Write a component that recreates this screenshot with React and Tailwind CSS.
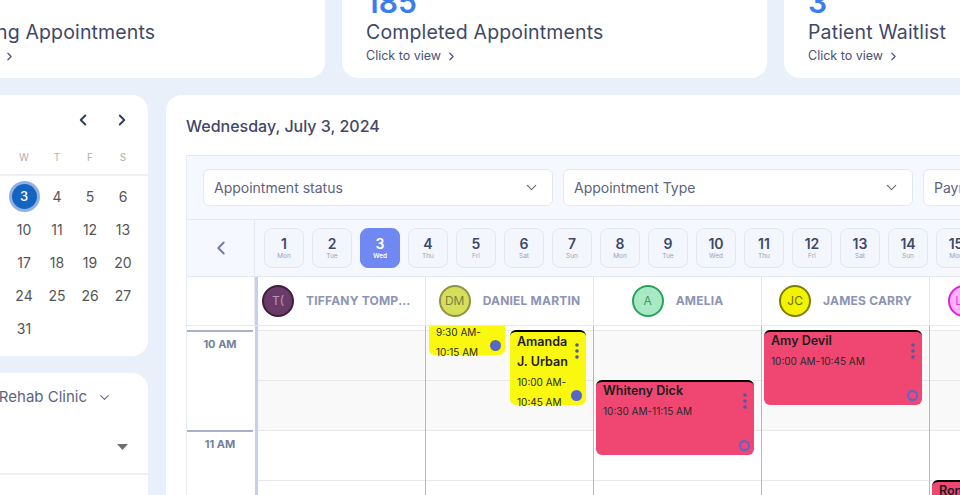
import React from "react";
import { ChevronLeft, ChevronRight, ChevronDown } from "lucide-react";

const DAYNAMES = ["Mon", "Tue", "Wed", "Thu", "Fri", "Sat", "Sun"];

function Kebab() {
  return (
    <svg width="4" height="16" viewBox="0 0 4 16" className="fill-[#4e5aa3]">
      <circle cx="2" cy="2" r="1.8" />
      <circle cx="2" cy="8" r="1.8" />
      <circle cx="2" cy="14" r="1.8" />
    </svg>
  );
}

function StatCard({ num, title }) {
  return (
    <div className="w-[425px] shrink-0 bg-white rounded-2xl pt-[14px] pb-[12px] px-6">
      <div className="text-[30px] leading-[36px] font-semibold text-[#3b7ded]">{num}</div>
      <div className="text-[19.5px] leading-6 tracking-[0.15px] text-[#3f4868]">{title}</div>
      <div className="mt-[2px] flex items-center gap-1 text-[12.5px] leading-5 text-[#4a5275]">
        Click to view <ChevronRight size={13} strokeWidth={2.2} />
      </div>
    </div>
  );
}

function MiniCalendar() {
  const rows = [
    ["30", 1, 2, 3, 4, 5, 6],
    [7, 8, 9, 10, 11, 12, 13],
    [14, 15, 16, 17, 18, 19, 20],
    [21, 22, 23, 24, 25, 26, 27],
    [28, 29, 30, 31, "", "", ""],
  ];
  return (
    <div className="h-[261px] bg-white rounded-2xl">
      <div className="h-[50px] flex items-center justify-between pl-5 pr-[14px]">
        <div className="text-[15px] font-semibold text-[#3f4868]">July 2024</div>
        <div className="flex items-center gap-[15px] text-[#2f3a5e]">
          <div className="w-6 h-6 flex items-center justify-center">
            <ChevronLeft size={18} strokeWidth={2.5} />
          </div>
          <div className="w-6 h-6 flex items-center justify-center">
            <ChevronRight size={18} strokeWidth={2.5} />
          </div>
        </div>
      </div>
      <div className="grid grid-cols-7 px-[8.5px] h-[31px] border-b-2 border-[#eef0f4]">
        {["S", "M", "T", "W", "T", "F", "S"].map((d, i) => (
          <div key={i} className="text-center text-[10px] leading-[24px] text-[#b0b0b0]">
            {d}
          </div>
        ))}
      </div>
      <div className="px-[8.5px] pt-[4px]">
        {rows.map((r, ri) => (
          <div key={ri} className="grid grid-cols-7 h-[33px]">
            {r.map((d, i) => (
              <div key={i} className="flex items-center justify-center">
                {d === 3 ? (
                  <div className="w-[25px] h-[25px] rounded-full bg-[#1565c0] ring-[3px] ring-[#8fb1e6] flex items-center justify-center text-[13px] font-medium text-white">
                    3
                  </div>
                ) : (
                  <span className={`text-[14px] ${d === "30" ? "text-[#c4c4c4]" : "text-[#555555]"}`}>{d}</span>
                )}
              </div>
            ))}
          </div>
        ))}
      </div>
    </div>
  );
}

function ClinicCard() {
  return (
    <div className="h-[200px] bg-white rounded-t-2xl">
      <div className="h-[48px] flex items-center justify-end gap-[10px] pr-[36px] text-[15px] text-[#5a6480]">
        <span>Physio Rehab Clinic</span>
        <ChevronDown size={15} strokeWidth={2} className="text-[#6b7595]" />
      </div>
      <div className="h-[54px] flex items-center justify-end pr-[20px] border-b-2 border-[#eef0f4]">
        <svg width="11" height="6" viewBox="0 0 11 6">
          <polygon points="0,0 11,0 5.5,6" fill="#6f6f6f" />
        </svg>
      </div>
    </div>
  );
}

function Select({ label }) {
  return (
    <div className="w-[350px] shrink-0 h-[37px] bg-white border border-[#e3e8f0] rounded-md flex items-center justify-between pl-[10px] pr-[12px] text-[14px] text-[#5b6380]">
      <span>{label}</span>
      <ChevronDown size={17} strokeWidth={1.6} className="text-[#666a75]" />
    </div>
  );
}

const providers = [
  { init: "T(", name: "TIFFANY TOMPSON", cls: "bg-[#6a3a68] border-[#3e1f3d] text-[#b99bb8]", first: true },
  { init: "DM", name: "DANIEL MARTIN", cls: "bg-[#d5df5a] border-[#8c9340] text-[#7d8240]" },
  { init: "A", name: "AMELIA", cls: "bg-[#a8e8c4] border-[#27a35a] text-[#3c9a60]" },
  { init: "JC", name: "JAMES CARRY", cls: "bg-[#f3f300] border-[#7d7d00] text-[#6b6b00]" },
  { init: "LM", name: "LISA MORGAN", cls: "bg-[#ffb3ff] border-[#e01ee0] text-[#e040e0]" },
  { init: "RK", name: "RYAN KING", cls: "bg-[#b3d4ff] border-[#2a6fd6] text-[#2a6fd6]" },
];

// minutes from 9:00 -> px (100px per hour)
const pos = (h, m) => ((h - 9) * 60 + m) * (100 / 60);

const appts = [
  { col: 1, name: "Jenny Wilson", time: ["9:30 AM-", "10:15 AM"], s: [9, 30], e: [10, 15], left: 3, width: 76, yellow: true },
  { col: 1, name: "Amanda J. Urban", time: ["10:00 AM-", "10:45 AM"], s: [10, 0], e: [10, 45], left: 84, width: 76, yellow: true },
  { col: 2, name: "Whiteny Dick", time: ["10:30 AM-11:15 AM"], s: [10, 30], e: [11, 15], left: 2, width: 158 },
  { col: 3, name: "Amy Devil", time: ["10:00 AM-10:45 AM"], s: [10, 0], e: [10, 45], left: 2, width: 158 },
  { col: 4, name: "Ronald Richards", time: ["11:30 AM-12:15 PM"], s: [11, 30], e: [12, 15], left: 2, width: 158 },
];

function Appt({ a }) {
  const top = pos(a.s[0], a.s[1]);
  const height = pos(a.e[0], a.e[1]) - top;
  return (
    <div
      className={`absolute rounded-[6px] border-t-2 border-black pl-[7px] pr-4 ${a.yellow ? "bg-[#fbf80f]" : "bg-[#ef4771]"}`}
      style={{ top, height, left: a.left, width: a.width }}
    >
      <div className={`text-[12.5px] leading-5 font-semibold text-[#1c1c1c] ${a.yellow ? "" : "-mt-[1px]"}`}>{a.name}</div>
      {a.time.map((t, i) => (
        <div key={i} className="text-[10px] leading-5 text-[#2a2a2a]">
          {t}
        </div>
      ))}
      <div className="absolute right-[7px] top-[11px]">
        <Kebab />
      </div>
      {a.yellow ? (
        <div className="absolute right-[4px] bottom-[4px] w-[11px] h-[11px] rounded-full bg-[#5767c4]" />
      ) : (
        <div className="absolute right-[4px] bottom-[4px] w-[11px] h-[11px] rounded-full border-2 border-[#5767cc]" />
      )}
    </div>
  );
}

function Scheduler() {
  const days = Array.from({ length: 31 }, (_, i) => i + 1);
  const hours = ["9 AM", "10 AM", "11 AM", "12 PM"];
  return (
    <div className="border border-[#e4e9f2] bg-[#f5f8fe] w-[1200px]">
      <div className="flex gap-[10px] pl-[16px] py-[13px] border-b border-[#e5e9f2]">
        <Select label="Appointment status" />
        <Select label="Appointment Type" />
        <Select label="Payment Status" />
      </div>
      <div className="flex h-[57px] border-b border-[#e5e9f2]">
        <div className="w-[68px] shrink-0 border-r border-[#e5e9f2] flex items-center justify-center text-[#6b7aa8]">
          <ChevronLeft size={22} strokeWidth={2} />
        </div>
        <div className="flex items-center gap-[8px] pl-[9px]">
          {days.map((d) => {
            const sel = d === 3;
            return (
              <div
                key={d}
                className={`w-[40px] h-[40px] shrink-0 rounded-[8px] border flex flex-col items-center justify-center ${
                  sel ? "bg-[#7088f2] border-[#7088f2] text-white" : "bg-[#f3f6fd] border-[#e1e6f0] text-[#3f4868]"
                }`}
              >
                <div className="text-[14px] leading-[17px] font-semibold">{d}</div>
                <div className={`text-[6.5px] leading-[9px] ${sel ? "text-white font-semibold" : "text-[#9da3b5]"}`}>
                  {DAYNAMES[(d - 1) % 7]}
                </div>
              </div>
            );
          })}
        </div>
      </div>
      <div className="flex h-[49px] bg-white border-b border-[#e8e8e8]">
        <div className="w-[68px] shrink-0 border-r border-[#e5e9f2]" />
        <div className="w-[3px] shrink-0 bg-[#c8cdf4]" />
        {providers.map((p, i) => (
          <div
            key={i}
            className={`w-[168px] shrink-0 border-r border-[#e6e6e6] flex items-center gap-[12px] ${
              p.first ? "justify-start pl-[4px]" : "justify-center"
            }`}
          >
            <div className={`w-8 h-8 shrink-0 rounded-full border-2 flex items-center justify-center text-[12px] ${p.cls}`}>
              {p.init}
            </div>
            <div className={`text-[12px] font-bold text-[#8d94b4] tracking-[0.2px] whitespace-nowrap ${p.first ? "w-[110px] truncate" : ""}`}>
              {p.name}
            </div>
          </div>
        ))}
      </div>
      <div className="h-[180px] overflow-hidden bg-white">
        <div className="flex -mt-[96px]">
          <div className="w-[68px] shrink-0 bg-white">
            {hours.map((h) => (
              <div key={h} className="h-[100px] border-t-2 border-[#a9b1c9] mr-[2px] pt-[4px] text-center text-[11px] leading-4 font-bold text-[#76809f]">
                {h}
              </div>
            ))}
          </div>
          <div className="w-[3px] shrink-0 bg-[#c8cdf4]" />
          {providers.map((p, ci) => (
            <div key={ci} className="w-[168px] shrink-0 border-r border-[#b9b9b9] relative">
              {hours.map((h, hi) => (
                <div key={h} className={hi === 1 ? "bg-[#f9f9f9]" : "bg-white"}>
                  <div className="h-[50px] border-t border-[#e8e8e8]" />
                  <div className="h-[50px] border-t border-[#e8e8e8]" />
                </div>
              ))}
              {appts
                .filter((a) => a.col === ci)
                .map((a, i) => (
                  <Appt key={i} a={a} />
                ))}
            </div>
          ))}
        </div>
      </div>
    </div>
  );
}

export default function App() {
  return (
    <div className="w-[960px] h-[495px] overflow-hidden bg-[#eaf0fa] [font-family:Inter,'Noto_Sans',sans-serif]">
      <div className="-ml-[100px] -mt-[30px] w-[1300px]">
        <div className="flex gap-[17px]">
          <StatCard num="42" title="Upcoming Appointments" />
          <StatCard num="185" title="Completed Appointments" />
          <StatCard num="3" title="Patient Waitlist" />
        </div>
        <div className="flex gap-[18px] mt-[17px]">
          <div className="w-[248px] shrink-0 flex flex-col gap-[17px]">
            <MiniCalendar />
            <ClinicCard />
          </div>
          <div className="flex-1 bg-white rounded-tl-2xl pl-5 pt-[19px] h-[460px] overflow-hidden">
            <div className="text-[16px] leading-6 font-medium text-[#3f4868]">Wednesday, July 3, 2024</div>
            <div className="mt-[17px]">
              <Scheduler />
            </div>
          </div>
        </div>
      </div>
    </div>
  );
}
